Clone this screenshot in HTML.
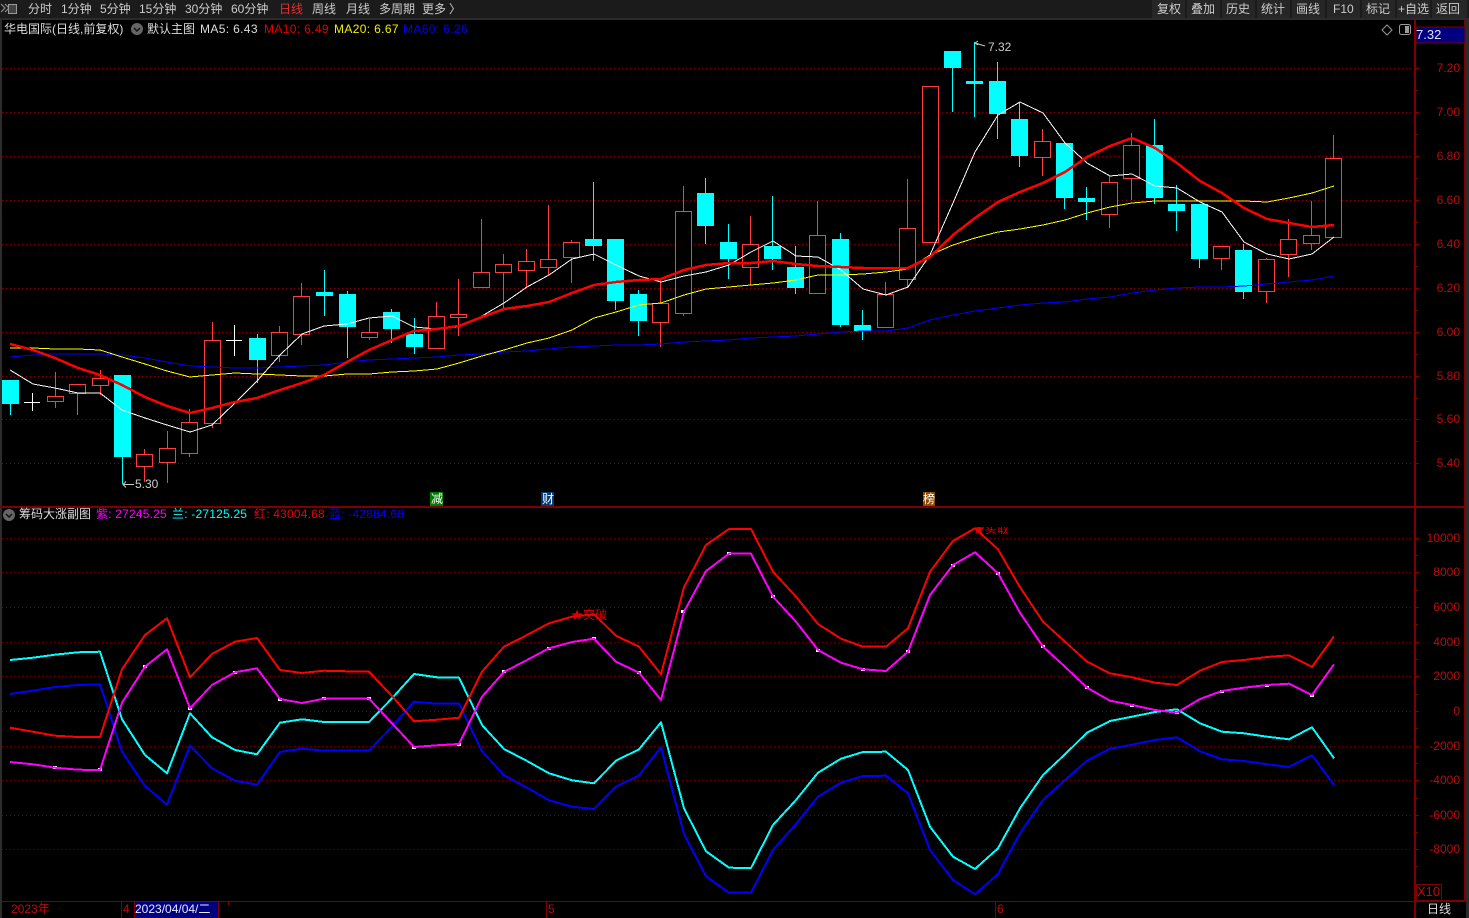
<!DOCTYPE html>
<html><head><meta charset="utf-8"><style>
html,body{margin:0;padding:0;background:#000;width:1469px;height:918px;overflow:hidden}
body{position:relative;font:12px/16px "Liberation Sans","Noto Sans CJK SC",sans-serif;color:#ccc}
.t{position:absolute;white-space:nowrap;line-height:16px}
.b{position:absolute;top:0;height:18px;background:#262626}
.a{position:absolute;left:1426px;width:34px;text-align:right;color:#b80c0c;line-height:14px}
.s{letter-spacing:.2px}
svg{position:absolute;left:0;top:0}
</style></head><body>
<div style="position:absolute;left:0;top:0;width:1469px;height:18px;background:#1b1b1b"></div>
<div style="position:absolute;left:0;top:18px;width:1469px;height:2px;background:#2b2b2b"></div>
<div class="b" style="left:1152px;width:33px"></div><div class="b" style="left:1187px;width:33px"></div><div class="b" style="left:1222px;width:33px"></div><div class="b" style="left:1257px;width:33px"></div><div class="b" style="left:1292px;width:33px"></div><div class="b" style="left:1327px;width:33px"></div><div class="b" style="left:1362px;width:33px"></div><div class="b" style="left:1397px;width:33px"></div><div class="b" style="left:1432px;width:35px"></div>
<svg width="1469" height="918" viewBox="0 0 1469 918">
<path d="M1 4l4 4-4 4M5 4l4 4-4 4" fill="none" stroke="#999" stroke-width="1"/><rect x="8.500" y="4.500" width="8" height="9" fill="#444" stroke="#999"/>
<rect x="0" y="20" width="2" height="898" fill="#2c2c2c"/>
<rect x="1466" y="20" width="3" height="898" fill="#2a2a2a"/>
<g shape-rendering="crispEdges">
<path stroke="#8a0000" stroke-dasharray="1 3" fill="none" d="M2 68.500H1415M2 112.500H1415M2 156.500H1415M2 200.500H1415M2 244.500H1415M2 288.500H1415M2 332.500H1415M2 376.500H1415M2 419.500H1415M2 463.500H1415"/>
<path stroke="#7a0000" stroke-dasharray="1 3" fill="none" d="M2 538.500H1415M2 572.500H1415M2 607.500H1415M2 642.500H1415M2 676.500H1415M2 711.500H1415M2 746.500H1415M2 780.500H1415M2 815.500H1415M2 849.500H1415"/>
<path stroke="#ff3c3c" fill="#000" d="M47.500 396.500h16v5h-16zM55.500 372v24M55.500 402v6M69.500 384.500h16v9h-16zM77.500 394v21M92.500 378.500h16v7h-16zM100.500 370v8M100.500 386v9M136.500 454.500h16v12h-16zM144.500 449v5M144.500 467v15M159.500 448.500h16v14h-16zM167.500 431v17M167.500 463v20M181.500 422.500h16v31h-16zM189.500 409v13M189.500 454v3M204.500 340.500h16v83h-16zM212.500 322v18M212.500 424v4M271.500 332.500h16v23h-16zM279.500 326v6M279.500 356v6M293.500 296.500h16v38h-16zM301.500 283v13M301.500 335v10M361.500 332.500h16v5h-16zM369.500 319v13M369.500 338v2M428.500 316.500h16v32h-16zM436.500 302v14M450.500 314.500h16v3h-16zM458.500 279v35M458.500 318v18M473.500 272.500h16v15h-16zM481.500 219v53M495.500 264.500h16v8h-16zM503.500 254v10M503.500 273v35M518.500 261.500h16v9h-16zM526.500 249v12M526.500 271v16M540.500 259.500h16v8h-16zM548.500 205v54M548.500 268v7M563.500 242.500h16v15h-16zM571.500 240v2M571.500 258v25M652.500 303.500h16v19h-16zM660.500 278v25M660.500 323v24M675.500 211.500h16v102h-16zM683.500 186v25M683.500 314v2M742.500 244.500h16v23h-16zM750.500 216v28M750.500 268v17M809.500 235.500h16v58h-16zM817.500 201v34M877.500 294.500h16v33h-16zM885.500 282v12M899.500 228.500h16v51h-16zM907.500 179v49M907.500 280v8M922.500 86.500h16v156h-16zM1034.500 141.500h16v16h-16zM1042.500 129v12M1042.500 158v18M1101.500 182.500h16v32h-16zM1109.500 176v6M1109.500 215v13M1123.500 145.500h16v33h-16zM1131.500 133v12M1131.500 179v21M1213.500 246.500h16v12h-16zM1221.500 259v11M1258.500 259.500h16v32h-16zM1266.500 258v1M1266.500 292v11M1280.500 239.500h16v15h-16zM1288.500 219v20M1288.500 255v22M1303.500 235.500h16v8h-16zM1311.500 201v34M1311.500 244v6M1325.500 158.500h16v79h-16zM1333.500 135v23"/>
<path stroke="#00ffff" fill="none" d="M10.500 404v11M122.500 457v27M257.500 334v4M257.500 360v23M324.500 270v46M347.500 291v67M391.500 309v34M414.500 318v36M593.500 182v79M615.500 301v9M638.500 290v46M705.500 178v66M728.500 224v55M772.500 196v74M795.500 246v48M840.500 233v94M862.500 310v30M952.500 68v44M974.500 42v75M997.500 62v77M1019.500 102v65M1064.500 198v11M1086.500 187v33M1154.500 119v85M1176.500 185v46M1199.500 259v9M1243.500 244v55"/>
<path fill="#00ffff" d="M2 380h17v24h-17zM114 375h17v82h-17zM249 338h17v22h-17zM316 292h17v4h-17zM339 294h17v33h-17zM383 312h17v17h-17zM406 334h17v13h-17zM585 239h17v7h-17zM607 239h17v62h-17zM630 294h17v27h-17zM697 193h17v33h-17zM720 242h17v17h-17zM764 246h17v13h-17zM787 267h17v21h-17zM832 239h17v86h-17zM854 325h17v6h-17zM944 51h17v17h-17zM966 81h17v3h-17zM989 81h17v33h-17zM1011 119h17v37h-17zM1056 143h17v55h-17zM1078 198h17v4h-17zM1146 145h17v53h-17zM1168 204h17v7h-17zM1191 204h17v55h-17zM1235 250h17v42h-17z"/>
<path stroke="#fff" fill="none" d="M24 402.500h16M32.500 393v18M226 340.500h16M234.500 325v31"/>
</g>
<g fill="none" stroke-linejoin="round" shape-rendering="crispEdges">
<polyline stroke="#0000ff" stroke-width="1" points="10,357 33,355 55,354 78,354 100,354 122,355 145,358 167,362 190,366 212,367 235,368 257,368 280,367 302,366 324,365 347,362 369,360 392,359 414,358 437,357 459,355 482,354 504,352 527,351 549,349 572,347 594,346 616,345 639,345 661,344 684,342 706,341 729,340 751,338 773,337 796,336 818,334 841,332 863,331 886,331 908,328 930,320 953,315 975,311 998,308 1020,305 1043,303 1065,302 1087,299 1110,297 1132,293 1155,290 1177,288 1200,287 1222,287 1244,286 1267,284 1289,282 1312,280 1334,276"/>
<polyline stroke="#ffff00" stroke-width="1" points="10,348 33,348 55,349 78,349 100,350 122,357 145,364 167,371 190,377 212,375 235,373 257,374 280,375 302,376 324,376 347,374 369,374 392,372 414,371 437,369 459,363 482,356 504,350 527,343 549,338 572,330 594,318 616,312 639,305 661,303 684,295 706,289 729,287 751,285 773,283 796,280 818,275 841,275 863,274 886,272 908,269 930,255 953,245 975,238 998,232 1020,229 1043,225 1065,220 1087,213 1110,207 1132,203 1155,201 1177,201 1200,201 1222,201 1244,201 1267,202 1289,198 1312,193 1334,186"/>
<polyline stroke="#ffffff" stroke-width="1" points="10,370 33,384 55,388 78,393 100,393 122,410 145,418 167,425 190,432 212,425 235,403 257,381 280,355 302,334 324,326 347,324 369,318 392,316 414,327 437,329 459,327 482,316 504,303 527,287 549,275 572,259 594,254 616,265 639,276 661,282 684,276 706,272 729,265 751,252 773,241 796,256 818,257 841,270 863,289 886,295 908,287 930,255 953,203 975,152 998,115 1020,102 1043,113 1065,143 1087,163 1110,176 1132,174 1155,186 1177,188 1200,202 1222,212 1244,242 1267,254 1289,259 1312,254 1334,237"/>
<polyline stroke="#ff0000" stroke-width="2.500" points="10,344 33,350 55,358 78,368 100,375 122,385 145,397 167,406 190,413 212,408 235,402 257,398 280,390 302,383 324,375 347,362 369,350 392,340 414,331 437,329 459,326 482,317 504,309 527,306 549,302 572,293 594,285 616,282 639,280 661,279 684,270 706,265 729,263 751,263 773,261 796,264 818,266 841,267 863,268 886,268 908,268 930,257 953,235 975,218 998,202 1020,192 1043,183 1065,172 1087,157 1110,146 1132,138 1155,148 1177,163 1200,181 1222,193 1244,208 1267,219 1289,223 1312,227 1334,225"/>
<g stroke-width="2">
<polyline stroke="#0000ff" points="10,694 33,690.700 55,687 78,685 100,684.300 122,751.700 145,786 167,804.700 190,745.700 212,768.300 235,780.700 257,784.700 280,752 302,748.700 324,750.700 347,750.700 369,750.700 392,726.700 414,701.700 437,703.700 459,703.700 482,751.300 504,775.300 527,787.700 549,800.300 572,806.700 594,809 616,786.700 639,775.300 661,747.300 684,834 706,876.300 729,892.700 751,892.700 773,850 796,824 818,796.700 841,782.700 863,776 886,775.700 908,793.300 930,850 953,880 975,894.300 998,874 1020,833.300 1043,800 1065,780 1087,760.700 1110,748.700 1132,744.700 1155,740 1177,737.300 1200,751.300 1222,759.300 1244,761 1267,764.300 1289,767 1312,755.300 1334,785"/>
<polyline stroke="#00ffff" points="10,660 33,657.700 55,654.700 78,652.300 100,651.700 122,719.300 145,755 167,773.300 190,713.300 212,737.300 235,750 257,754.300 280,722.700 302,719.300 324,722 347,722 369,722 392,698.300 414,674 437,677.300 459,677.700 482,725 504,749 527,761 549,773.300 572,780.300 594,783.300 616,760.700 639,749.300 661,722.300 684,808.300 706,851.300 729,867.700 751,868 773,825 796,800 818,772.700 841,758.700 863,752 886,751.700 908,770 930,826.700 953,856.700 975,869 998,848.300 1020,808.300 1043,775 1065,754.300 1087,732.700 1110,721 1132,716.700 1155,712 1177,709.300 1200,723.300 1222,731.700 1244,733.300 1267,736.700 1289,739.300 1312,727.300 1334,758.300"/>
<polyline stroke="#ff0000" points="10,727.700 33,731.700 55,735.700 78,737 100,737 122,669.300 145,635 167,618.300 190,677.300 212,654 235,641.700 257,638 280,670 302,673 324,670.700 347,671.300 369,671.700 392,696 414,721.300 437,719.700 459,717.700 482,671.700 504,646.700 527,635 549,623.300 572,616.700 594,614.300 616,635.700 639,646.700 661,674.300 684,587.300 706,545 729,529 751,529 773,571.700 796,596.700 818,624 841,638.700 863,646.700 886,646.700 908,628.300 930,571.700 953,541 975,528.300 998,549.300 1020,587.300 1043,621.700 1065,641.700 1087,661.700 1110,673.300 1132,677.300 1155,682.700 1177,685 1200,670.700 1222,662 1244,660 1267,657 1289,655.300 1312,667 1334,636.300"/>
<path fill="#fff" stroke="none" d="M53 766h4v3h-4zM98 768h4v3h-4zM143 665h4v3h-4zM188 707h4v3h-4zM233 671h4v3h-4zM278 698h4v3h-4zM322 697h4v3h-4zM367 697h4v3h-4zM412 746h4v3h-4zM457 743h4v3h-4zM502 670h4v3h-4zM547 647h4v3h-4zM592 637h4v3h-4zM637 671h4v3h-4zM681 610h4v3h-4zM727 552h4v3h-4zM771 595h4v3h-4zM816 649h4v3h-4zM861 668h4v3h-4zM906 650h4v3h-4zM951 564h4v3h-4zM996 572h4v3h-4zM1041 645h4v3h-4zM1085 686h4v3h-4zM1130 704h4v3h-4zM1175 711h4v3h-4zM1220 690h4v3h-4zM1265 684h4v3h-4zM1310 694h4v3h-4z"/>
<polyline stroke="#ff00ff" points="10,762 33,764.300 55,767.700 78,769.700 100,770 122,702.700 145,666.700 167,649.300 190,708.300 212,685 235,672.300 257,668.300 280,699 302,703 324,698.700 347,698.700 369,698.700 392,723.300 414,747 437,745.300 459,744 482,696.700 504,672 527,660 549,648.300 572,642 594,638.700 616,661.700 639,672.700 661,700 684,611.700 706,571 729,553.700 751,553.700 773,596.700 796,621.700 818,650 841,662.700 863,669.300 886,671 908,651.700 930,595 953,565 975,552.300 998,573.300 1020,612.700 1043,646.700 1065,666.700 1087,687.700 1110,700.700 1132,705 1155,710 1177,712.700 1200,699 1222,691 1244,687.700 1267,685 1289,683.700 1312,695 1334,664.300"/>
</g>
</g>
<g shape-rendering="crispEdges" fill="none" stroke="#800000">
<path stroke-width="2" d="M1415 20V918M1465 20V902"/>
<path stroke-width="2" d="M1415 901H1465M0 507H1465"/>
<path d="M2 901.500H1415"/>
<path d="M1415 68.500h4M1415 90.500h3M1415 112.500h4M1415 134.500h3M1415 156.500h4M1415 178.500h3M1415 200.500h4M1415 222.500h3M1415 244.500h4M1415 266.500h3M1415 288.500h4M1415 310.500h3M1415 332.500h4M1415 354.500h3M1415 376.500h4M1415 398.500h3M1415 419.500h4M1415 441.500h3M1415 463.500h4M1415 538.500h4M1415 555.500h3M1415 572.500h4M1415 590.500h3M1415 607.500h4M1415 624.500h3M1415 642.500h4M1415 659.500h3M1415 676.500h4M1415 694.500h3M1415 711.500h4M1415 728.500h3M1415 746.500h4M1415 763.500h3M1415 780.500h4M1415 798.500h3M1415 815.500h4M1415 832.500h3M1415 849.500h4M1415 866.500h3"/>
<path d="M121.500 902v16M134.500 902v16M218.500 902v16M228.500 902v3M546.500 902v16M995.500 902v16"/>
<rect x="1416.500" y="884.500" width="25" height="16"/>
</g>
<rect x="1416" y="27" width="49" height="16" fill="#000080" stroke="#800000" shape-rendering="crispEdges"/>
<rect x="135" y="902" width="83" height="16" fill="#000080"/>
<circle cx="137" cy="29" r="6" fill="#666"/><path d="M134 28l3 3 3-3" fill="none" stroke="#111" stroke-width="1.500"/>
<circle cx="9" cy="515" r="6" fill="#666"/><path d="M6 514l3 3 3-3" fill="none" stroke="#111" stroke-width="1.500"/>
<path d="M1387 25l5 5-5 5-5-5z" fill="none" stroke="#999"/>
<rect x="1399.500" y="24.500" width="11" height="10" rx="2" fill="none" stroke="#999"/><rect x="1405" y="26" width="4" height="7" fill="#999"/>
<path d="M134 484.500h-11m3-3l-3 3 3 3" fill="none" stroke="#ccc"/>
<path d="M975 43l10 3M978 41l-3 2 3 2" fill="none" stroke="#ccc"/>
<rect x="430" y="492" width="13" height="14" fill="#007a00"/><rect x="541" y="492" width="13" height="14" fill="#003a78"/><rect x="923" y="492" width="12" height="14" fill="#8a4a00"/>
</svg>
<span class="t" style="left:28px;top:1px">分时</span><span class="t" style="left:61px;top:1px">1分钟</span><span class="t" style="left:100px;top:1px">5分钟</span><span class="t" style="left:139px;top:1px">15分钟</span><span class="t" style="left:185px;top:1px">30分钟</span><span class="t" style="left:231px;top:1px">60分钟</span><span class="t" style="left:279px;top:1px;color:#e03030">日线</span><span class="t" style="left:312px;top:1px">周线</span><span class="t" style="left:346px;top:1px">月线</span><span class="t" style="left:379px;top:1px">多周期</span><span class="t" style="left:422px;top:1px">更多</span><span class="t" style="left:449px;top:1px">〉</span>
<span class="t" style="left:1157px;top:1px">复权</span><span class="t" style="left:1191px;top:1px">叠加</span><span class="t" style="left:1226px;top:1px">历史</span><span class="t" style="left:1261px;top:1px">统计</span><span class="t" style="left:1296px;top:1px">画线</span><span class="t" style="left:1333px;top:1px">F10</span><span class="t" style="left:1366px;top:1px">标记</span><span class="t" style="left:1398px;top:1px">+自选</span><span class="t" style="left:1436px;top:1px">返回</span>
<span class="t" style="left:4px;top:21px;color:#ddd">华电国际(日线,前复权)</span><span class="t" style="left:147px;top:21px;color:#ddd">默认主图</span>
<span class="t" style="left:200px;top:21px;color:#ddd;letter-spacing:.35px">MA5: 6.43</span><span class="t" style="left:264px;top:21px;color:#e00000;letter-spacing:.35px">MA10: 6.49</span><span class="t" style="left:334px;top:21px;color:#f0f000;letter-spacing:.35px">MA20: 6.67</span><span class="t" style="left:403px;top:21px;color:#0000e8;letter-spacing:.35px">MA60: 6.26</span>
<span class="t" style="left:1416px;top:27px;color:#e0e0ff;font-size:13px">7.32</span>
<span class="t" style="left:988px;top:39px;color:#ccc">7.32</span><span class="t" style="left:135px;top:476px;color:#ccc">5.30</span>
<span class="t" style="left:431px;top:491px;color:#fff">减</span><span class="t" style="left:542px;top:491px;color:#fff">财</span><span class="t" style="left:923px;top:491px;color:#fff">榜</span>
<span class="t" style="left:19px;top:506px;color:#ddd">筹码大涨副图</span><span class="t s" style="left:96px;top:506px;color:#ff00ff">紫: 27245.25</span><span class="t s" style="left:172px;top:506px;color:#00ffff">兰: -27125.25</span><span class="t s" style="left:254px;top:506px;color:#f00000">红: 43004.68</span><span class="t s" style="left:329px;top:506px;color:#0000ff">蓝: -42884.68</span>
<span class="t" style="left:571px;top:607px;color:#e00000">★突破</span>
<div style="position:absolute;left:973px;top:527px;width:40px;height:7px;overflow:hidden"><span class="t" style="left:0;top:-6px;color:#e00000">★买取</span></div>
<span class="a" style="top:61px">7.20</span><span class="a" style="top:105px">7.00</span><span class="a" style="top:149px">6.80</span><span class="a" style="top:193px">6.60</span><span class="a" style="top:237px">6.40</span><span class="a" style="top:281px">6.20</span><span class="a" style="top:325px">6.00</span><span class="a" style="top:369px">5.80</span><span class="a" style="top:412px">5.60</span><span class="a" style="top:456px">5.40</span>
<span class="a" style="top:531px">10000</span><span class="a" style="top:565px">8000</span><span class="a" style="top:600px">6000</span><span class="a" style="top:635px">4000</span><span class="a" style="top:669px">2000</span><span class="a" style="top:704px">0</span><span class="a" style="top:739px">-2000</span><span class="a" style="top:773px">-4000</span><span class="a" style="top:808px">-6000</span><span class="a" style="top:842px">-8000</span>
<span class="t" style="left:1417px;top:884px;color:#b80c0c;font-size:13px">X10</span>
<span class="t" style="left:1427px;top:901px;color:#ddd">日线</span>
<span class="t" style="left:11px;top:901px;color:#b80c0c">2023年</span><span class="t" style="left:123px;top:901px;color:#b80c0c">4</span><span class="t" style="left:135px;top:901px;color:#e8e8ff">2023/04/04/二</span><span class="t" style="left:548px;top:901px;color:#b80c0c">5</span><span class="t" style="left:997px;top:901px;color:#b80c0c">6</span>
</body></html>
